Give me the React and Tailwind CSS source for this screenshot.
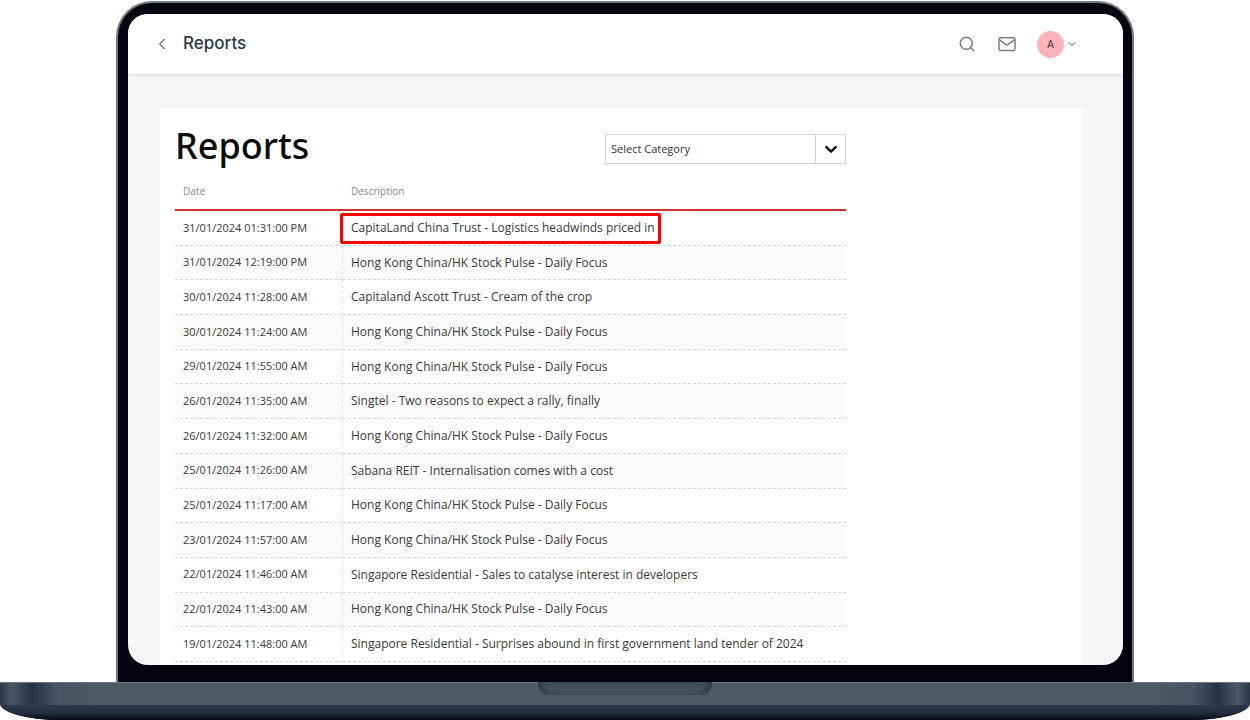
import { ChevronDown, ChevronLeft, Search } from 'lucide-react';

const HK_DAILY = 'Hong Kong China/HK Stock Pulse - Daily Focus';

const reports = [
    { date: '31/01/2024 01:31:00 PM', title: 'CapitaLand China Trust - Logistics headwinds priced in', highlighted: true },
    { date: '31/01/2024 12:19:00 PM', title: HK_DAILY },
    { date: '30/01/2024 11:28:00 AM', title: 'Capitaland Ascott Trust - Cream of the crop' },
    { date: '30/01/2024 11:24:00 AM', title: HK_DAILY },
    { date: '29/01/2024 11:55:00 AM', title: HK_DAILY },
    { date: '26/01/2024 11:35:00 AM', title: 'Singtel - Two reasons to expect a rally, finally' },
    { date: '26/01/2024 11:32:00 AM', title: HK_DAILY },
    { date: '25/01/2024 11:26:00 AM', title: 'Sabana REIT - Internalisation comes with a cost' },
    { date: '25/01/2024 11:17:00 AM', title: HK_DAILY },
    { date: '23/01/2024 11:57:00 AM', title: HK_DAILY },
    { date: '22/01/2024 11:46:00 AM', title: 'Singapore Residential - Sales to catalyse interest in developers' },
    { date: '22/01/2024 11:43:00 AM', title: HK_DAILY },
    { date: '19/01/2024 11:48:00 AM', title: 'Singapore Residential - Surprises abound in first government land tender of 2024' },
];

const TopBar = () => (
    <header className="relative flex h-[60px] items-center justify-between bg-white pl-[25px] pr-[45px] shadow-[0_1px_3px_rgba(0,0,0,0.12)]">
        <div className="flex items-center gap-3">
            <button aria-label="Back" className="text-[#6b7780]">
                <ChevronLeft className="h-[18px] w-[18px]" strokeWidth={1.75} />
            </button>
            <h1 className="font-['Inter',sans-serif] text-[17px] font-medium text-[#2b3a45]">Reports</h1>
        </div>
        <div className="flex items-center text-[#74818a]">
            <button aria-label="Search" className="mr-[22px]">
                <Search className="h-[18px] w-[18px]" strokeWidth={2} />
            </button>
            <button aria-label="Messages" className="mr-[21px]">
                <svg viewBox="0 0 18 18" className="h-[18px] w-[18px]" fill="none" stroke="currentColor" strokeWidth="1.5" strokeLinecap="round" strokeLinejoin="round">
                    <rect x="1" y="2.8" width="16" height="12.6" rx="1.6" />
                    <path d="M1.3 4.6 L8.2 9.6 Q9 10.1 9.8 9.6 L16.7 4.6" />
                </svg>
            </button>
            <button aria-label="Account" className="flex items-center gap-[2px]">
                <span className="flex h-[27px] w-[27px] items-center justify-center rounded-full bg-[#ffb3b8] font-['Inter',sans-serif] text-[10px] font-medium text-[#4a4a55]">
                    A
                </span>
                <ChevronDown className="h-3 w-3 text-[#96a0a7]" strokeWidth={2.5} />
            </button>
        </div>
    </header>
);

const CategorySelect = () => (
    <div className="relative w-[241px]">
        <select
            aria-label="Category"
            className="block h-[30px] w-full appearance-none border border-[#d3d3d3] bg-white pl-[5px] text-[11px] text-[#333]"
        >
            <option>Select Category</option>
        </select>
        <span className="pointer-events-none absolute inset-y-0 right-0 flex w-[31px] items-center justify-center border-l border-[#d3d3d3]">
            <svg viewBox="0 0 14 10" className="h-[10px] w-[14px]" fill="none" stroke="#111" strokeWidth="2.4">
                <path d="M1.6 2.4 L7 7.6 L12.4 2.4" strokeLinejoin="round" />
            </svg>
        </span>
    </div>
);

const ReportsTable = () => (
    <table className="h-[488px] w-full border-separate border-spacing-0 text-left text-[#3a3a3a]">
        <thead>
            <tr className="h-[37px] text-[10px] text-[#8a8a8a]">
                <th className="w-[168px] border-b-2 border-[#d0312d] pl-2 font-normal">Date</th>
                <th className="border-b-2 border-[#d0312d] pl-2 font-normal">Description</th>
            </tr>
        </thead>
        <tbody>
            {reports.map((report) => (
                <tr key={report.date} className="even:bg-[#fbfbfb]">
                    <td className="border-b border-r border-dashed border-b-[#d6d6d6] border-r-[#e4e4e4] pl-2 text-[11px]">
                        {report.date}
                    </td>
                    <td className="border-b border-dashed border-[#d6d6d6] pl-2 text-xs">
                        <a href="#report" className="relative">
                            {report.title}
                            {report.highlighted && (
                                <span className="absolute -bottom-2 -left-[11px] -right-1.5 -top-1.5 rounded-xs border-3 border-[#fe0000]" />
                            )}
                        </a>
                    </td>
                </tr>
            ))}
        </tbody>
    </table>
);

const LaptopBase = () => (
    <div className="relative h-[38px] overflow-hidden rounded-b-[60px_17px] bg-[#0d1020]">
        <div className="h-[23px] border-t border-[#6b7780] bg-[linear-gradient(90deg,#2b3648_0px,#4b5966_12px,#273247_32px,#475563_58px,#4d5b66_100px,#4d5b66_calc(100%-100px),#475563_calc(100%-58px),#273247_calc(100%-32px),#4b5966_calc(100%-12px),#2b3648_100%)]" />
        <div className="h-[15px] bg-linear-to-b from-[#2c3a4a] via-[#232f40] to-[#090a18]" />
        <div className="absolute left-1/2 top-0 h-[13px] w-[174px] -translate-x-1/2 rounded-b-xl bg-[#43515e] shadow-[inset_8px_0_6px_-4px_#2c3847,inset_-8px_0_6px_-4px_#2c3847]" />
    </div>
);

const App = () => {
    return (
        <div className="bg-white pt-px font-['Open_Sans',sans-serif]">
            <div className="mx-[116px] rounded-t-[36px] border-x-2 border-t-2 border-[#6b7c7e] bg-[#04040f] pb-[17px] pl-[10px] pr-[9px] pt-[11px]">
                <div className="overflow-hidden rounded-[20px] bg-[#f4f6f8]">
                    <TopBar />
                    <main className="pl-8 pr-[41px] pt-[34px]">
                        <section className="bg-white px-[15px] pb-[3px] pt-4">
                            <div className="max-w-[671px]">
                                <div className="flex h-[50px] items-start justify-between">
                                    <h2 className="font-['Noto_Sans',sans-serif] text-[36px] font-medium leading-[44px] text-[#0d0d0d]">
                                        Reports
                                    </h2>
                                    <div className="pt-[10px]">
                                        <CategorySelect />
                                    </div>
                                </div>
                                <ReportsTable />
                            </div>
                        </section>
                    </main>
                </div>
            </div>
            <LaptopBase />
        </div>
    );
};

export default App;
